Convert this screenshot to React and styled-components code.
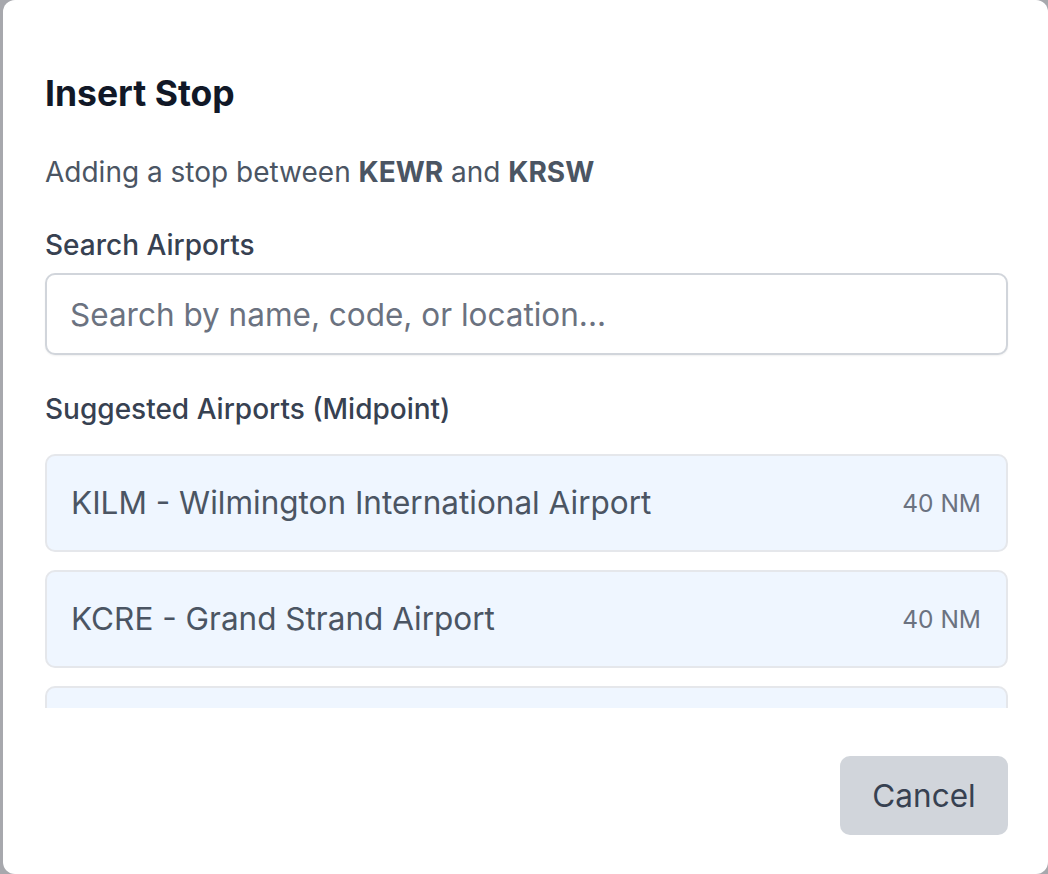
import React from 'react';
import styled, { createGlobalStyle } from 'styled-components';

const Global = createGlobalStyle`
  html, body {
    margin: 0;
    padding: 0;
    background: #a7a8ad;
    font-family: Inter, 'Noto Sans', sans-serif;
  }
`

const Backdrop = styled.div`
  display: flex;
  padding-left: 3px;
  height: 874px;
  overflow: hidden;
`

const Modal = styled.div`
  flex: 1;
  background: #fff;
  border-radius: 12px;
  padding: 74px 40px 39px 42px;
  display: flex;
  flex-direction: column;
  box-sizing: border-box;
`

const Title = styled.h2`
  margin: 0;
  font-size: 35.5px;
  line-height: 40px;
  font-weight: 700;
  color: #111827;
`

const Desc = styled.p`
  margin: 40px 0 0;
  font-size: 28px;
  line-height: 36px;
  color: #4b5563;
  b {
    font-weight: 700;
  }
`

const Label = styled.div`
  margin-top: ${p => p.gap}px;
  font-size: 28px;
  line-height: 36px;
  font-weight: 500;
  color: #374151;
`

const SearchInput = styled.input`
  margin-top: 10px;
  height: 82px;
  box-sizing: border-box;
  border: 2px solid #d1d5db;
  border-radius: 10px;
  padding: 0 23px;
  font-family: inherit;
  font-size: 31.5px;
  color: #111827;
  box-shadow: 0 1px 2px rgba(0,0,0,0.06);
  outline: none;
  &::placeholder {
    color: #6b7280;
  }
`

const List = styled.div`
  margin-top: 27px;
  height: 254px;
  overflow: hidden;
  display: flex;
  flex-direction: column;
  gap: 18px;
`

const Item = styled.div`
  flex-shrink: 0;
  height: 98px;
  box-sizing: border-box;
  display: flex;
  align-items: center;
  justify-content: space-between;
  padding: 0 25px 0 24px;
  background: #eff6ff;
  border: 2px solid #e5e7eb;
  border-radius: 10px;
`

const Name = styled.span`
  font-size: 31.5px;
  line-height: 36px;
  color: #4b5563;
`

const Dist = styled.span`
  font-size: 24.5px;
  line-height: 32px;
  color: #6b7280;
`

const Footer = styled.div`
  margin-top: auto;
  display: flex;
  justify-content: flex-end;
`

const CancelButton = styled.button`
  width: 168px;
  height: 79px;
  border: none;
  border-radius: 10px;
  background: #d1d5db;
  color: #374151;
  font-family: inherit;
  font-size: 31.5px;
`

const airports = [
  { code: 'KILM', name: 'Wilmington International Airport', nm: 40 },
  { code: 'KCRE', name: 'Grand Strand Airport', nm: 40 },
  { code: 'KMYR', name: 'Myrtle Beach International Airport', nm: 45 },
]

export default function App() {
  return (
    <Backdrop>
      <Global />
      <Modal>
        <Title>Insert Stop</Title>
        <Desc>Adding a stop between <b>KEWR</b> and <b>KRSW</b></Desc>
        <Label gap={37}>Search Airports</Label>
        <SearchInput type="text" placeholder="Search by name, code, or location..." />
        <Label gap={36}>Suggested Airports (Midpoint)</Label>
        <List>
          {airports.map(a => (
            <Item key={a.code}>
              <Name>{a.code} - {a.name}</Name>
              <Dist>{a.nm} NM</Dist>
            </Item>
          ))}
        </List>
        <Footer>
          <CancelButton>Cancel</CancelButton>
        </Footer>
      </Modal>
    </Backdrop>
  );
}
